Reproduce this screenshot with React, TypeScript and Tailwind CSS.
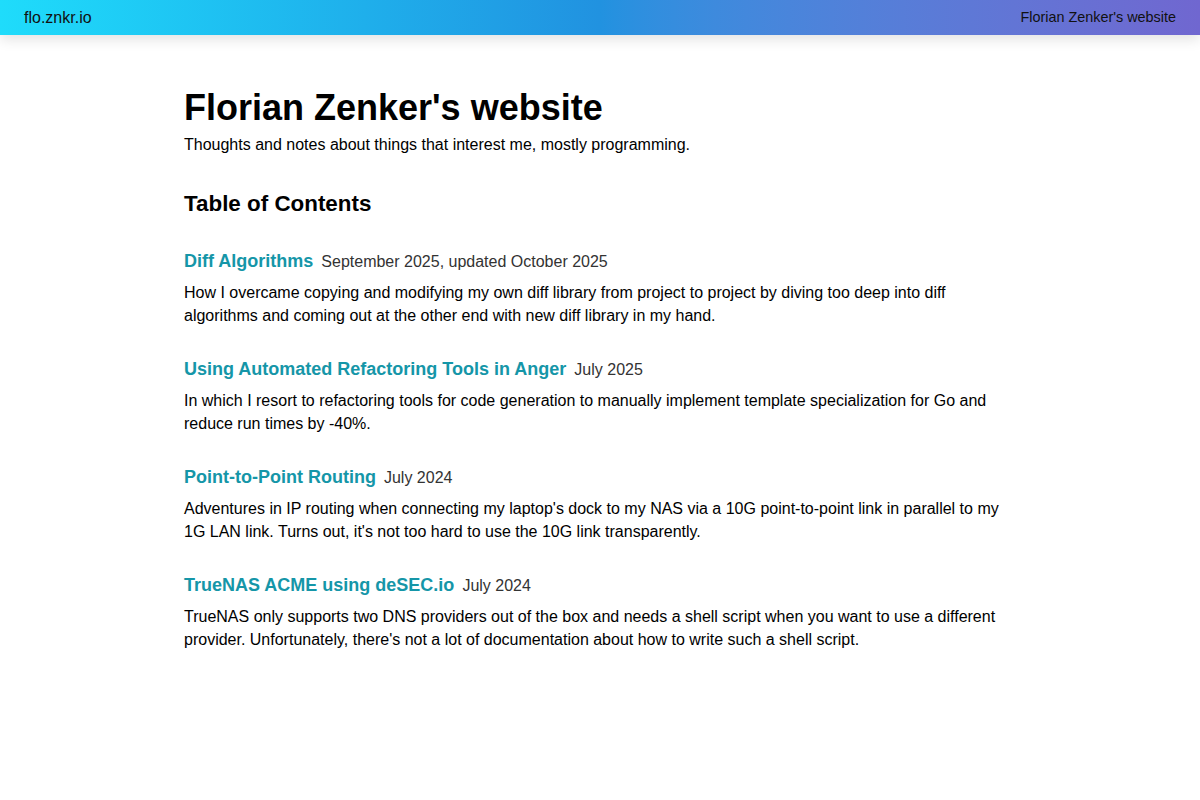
const posts = [
  {
    title: "Diff Algorithms",
    date: "September 2025, updated October 2025",
    summary:
      "How I overcame copying and modifying my own diff library from project to project by diving too deep into diff algorithms and coming out at the other end with new diff library in my hand.",
  },
  {
    title: "Using Automated Refactoring Tools in Anger",
    date: "July 2025",
    summary:
      "In which I resort to refactoring tools for code generation to manually implement template specialization for Go and reduce run times by -40%.",
  },
  {
    title: "Point-to-Point Routing",
    date: "July 2024",
    summary:
      "Adventures in IP routing when connecting my laptop's dock to my NAS via a 10G point-to-point link in parallel to my 1G LAN link. Turns out, it's not too hard to use the 10G link transparently.",
  },
  {
    title: "TrueNAS ACME using deSEC.io",
    date: "July 2024",
    summary:
      "TrueNAS only supports two DNS providers out of the box and needs a shell script when you want to use a different provider. Unfortunately, there's not a lot of documentation about how to write such a shell script.",
  },
];

export default function App() {
  return (
    <div className="min-h-screen bg-white text-black font-['Liberation_Sans',Arial,sans-serif]">
      <header className="h-[35px] flex items-center justify-between px-6 bg-gradient-to-r from-[#1fdcfb] via-[#2192e0] to-[#7067d0] shadow-[0_4px_14px_rgba(0,0,0,0.12)]">
        <a href="#" className="text-base text-[#111]">flo.znkr.io</a>
        <span className="text-[14.4px] text-[#111]">Florian Zenker's website</span>
      </header>

      <main className="w-[832px] mx-auto pt-[51px]">
        <h1 className="text-[36px] font-bold leading-[44px]">Florian Zenker's website</h1>
        <p className="text-base leading-[23px] mt-[3px]">
          Thoughts and notes about things that interest me, mostly programming.
        </p>

        <h2 className="text-[22.4px] font-bold leading-[28px] mt-[34px]">Table of Contents</h2>

        <ul className="mt-[29px] flex flex-col gap-[28px]">
          {posts.map((p) => (
            <li key={p.title}>
              <div className="flex items-baseline gap-2 leading-[24px]">
                <a href="#" className="text-lg font-bold text-[#1596a8]">{p.title}</a>
                <span className="text-base text-[#333]">{p.date}</span>
              </div>
              <p className="mt-[6px] text-base leading-[23px]">{p.summary}</p>
            </li>
          ))}
        </ul>
      </main>
    </div>
  );
}
